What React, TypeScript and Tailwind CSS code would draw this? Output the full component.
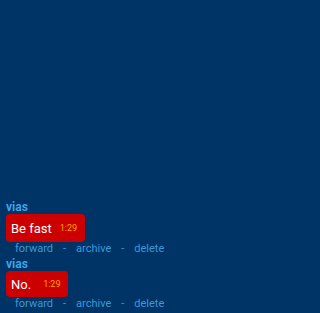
import React from "react";

const msgs = [
  { from: "vias", text: "Be fast", time: "1:29", bubble: "h-[28px] gap-[8px]" },
  { from: "vias", text: "No.", time: "1:29", bubble: "h-[26px] gap-[12px]" },
];

export default function App() {
  return (
    <div
      className="w-[320px] h-[313px] bg-[#003366] flex flex-col justify-end gap-[3px] px-[6px] pb-[3px] overflow-hidden"
      style={{ fontFamily: "Roboto, 'Liberation Sans', sans-serif" }}
    >
      {msgs.map((m, i) => (
        <div key={i} className="flex flex-col items-start">
          <div className="text-[12px] leading-[13px] font-bold text-[#3fa2e6]">{m.from}</div>
          <div className={`${m.bubble} bg-[#cc0000] rounded-[4px] pl-[5px] pr-[8px] flex items-center`}>
            <span className="text-[13px] text-white leading-none">{m.text}</span>
            <span className="text-[9px] text-[#ffa000] leading-none">{m.time}</span>
          </div>
          <div className="pl-[9px] text-[11px] leading-[13px] text-[#3a9ad9] flex gap-[10px]">
            <span>forward</span>
            <span>-</span>
            <span>archive</span>
            <span>-</span>
            <span>delete</span>
          </div>
        </div>
      ))}
    </div>
  );
}
